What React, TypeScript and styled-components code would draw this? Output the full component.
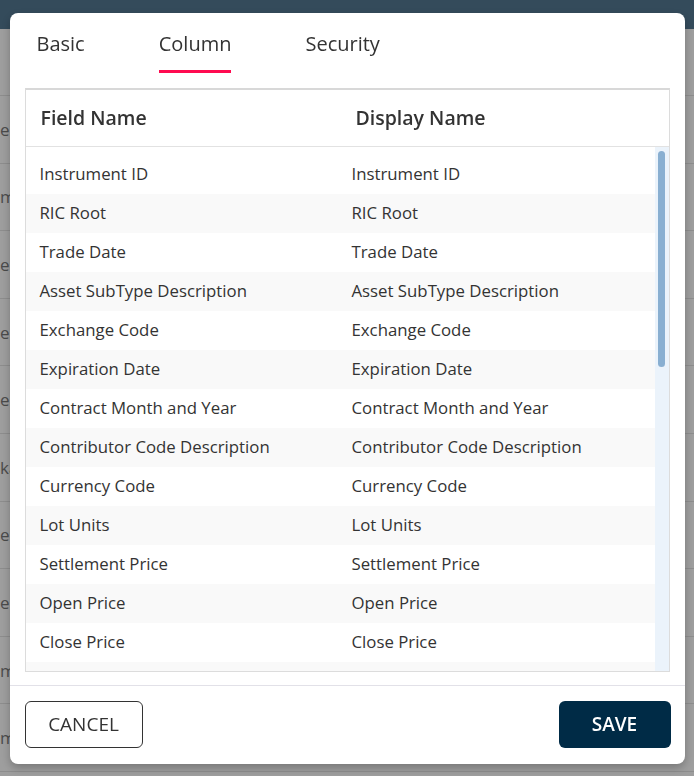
import React from "react";
import styled, { createGlobalStyle } from "styled-components";

const GlobalStyle = createGlobalStyle`
  html, body {
    margin: 0;
    padding: 0;
    background: #ffffff;
    font-family: "Open Sans", "Liberation Sans", sans-serif;
  }
  * { box-sizing: border-box; }
`;

/* ---------- background page ---------- */
const Page = styled.div`
  width: 694px;
  height: 776px;
  overflow: hidden;
  background: #ffffff;
`;

const PageHeader = styled.div`
  height: 29px;
  background: #547993;
`;

const PageRow = styled.div<{ $first?: boolean }>`
  height: ${(p) => (p.$first ? "67px" : "67.6px")};
  border-bottom: 1px solid #e4e4e4;
  display: flex;
  align-items: center;
  font-size: 17px;
  color: #7a7a7a;
  white-space: nowrap;
`;

/* ---------- modal ---------- */
const Overlay = styled.div`
  position: fixed;
  inset: 0;
  background: rgba(0, 0, 0, 0.38);
  display: flex;
  align-items: center;
  justify-content: center;
`;

const Modal = styled.div`
  width: 675px;
  height: 751px;
  background: #ffffff;
  border-radius: 8px;
  box-shadow: 0 4px 10px rgba(0, 0, 0, 0.25);
  display: flex;
  flex-direction: column;
  color: #333333;
`;

const TabBar = styled.div`
  display: flex;
  gap: 74px;
  padding-left: 27px;
  margin-bottom: 15px;
`;

const Tab = styled.div<{ $active?: boolean }>`
  padding-top: 17px;
  padding-bottom: 13px;
  font-size: 20px;
  line-height: 27px;
  color: #333333;
  border-bottom: 3px solid ${(p) => (p.$active ? "#ff0a50" : "transparent")};
  cursor: pointer;
`;

const TableBox = styled.div`
  margin: 0 15px;
  height: 584px;
  border: 1px solid #dcdcdc;
  border-top: 2px solid #d8d8d8;
  display: flex;
  flex-direction: column;
`;

const HeaderRow = styled.div`
  height: 57px;
  flex: none;
  border-bottom: 1px solid #e2e2e2;
  display: grid;
  grid-template-columns: 315px 1fr;
  align-items: center;
  padding-left: 15px;
  font-size: 19.5px;
  font-weight: 600;
  color: #333333;
`;

const BodyWrap = styled.div`
  flex: 1;
  min-height: 0;
  display: flex;
`;

const Body = styled.div`
  flex: 1;
  overflow: hidden;
  padding-top: 8px;
`;

const ScrollTrack = styled.div`
  width: 14px;
  flex: none;
  background: #ebf3fb;
  padding: 4px 4px 0 3px;
`;

const ScrollThumb = styled.div`
  height: 216px;
  border-radius: 4px;
  background: #89afd1;
`;

const Row = styled.div<{ $striped?: boolean }>`
  height: 39px;
  display: grid;
  grid-template-columns: 312px 1fr;
  align-items: center;
  padding-left: 14px;
  padding-bottom: 1px;
  font-size: 16.8px;
  color: #333333;
  background: ${(p) => (p.$striped ? "#f9f9f9" : "#ffffff")};
`;

const Divider = styled.div`
  margin-top: 13px;
  height: 1px;
  background: #e2e1e8;
`;

const Footer = styled.div`
  display: flex;
  justify-content: space-between;
  padding: 15px 14px 16px 15px;
`;

const Button = styled.button<{ $primary?: boolean }>`
  height: 47px;
  width: ${(p) => (p.$primary ? "112px" : "118px")};
  border-radius: 6px;
  font-family: "Open Sans", "Liberation Sans", sans-serif;
  font-size: 19px;
  font-weight: ${(p) => (p.$primary ? 600 : 400)};
  color: ${(p) => (p.$primary ? "#ffffff" : "#333333")};
  background: ${(p) => (p.$primary ? "#002b46" : "#ffffff")};
  border: ${(p) => (p.$primary ? "none" : "1px solid #333333")};
  cursor: pointer;
`;

const fields = [
  "Instrument ID",
  "RIC Root",
  "Trade Date",
  "Asset SubType Description",
  "Exchange Code",
  "Expiration Date",
  "Contract Month and Year",
  "Contributor Code Description",
  "Currency Code",
  "Lot Units",
  "Settlement Price",
  "Open Price",
  "Close Price",
  "",
];

const pageRows = ["", "e", "m", "e", "e", "e", "ka", "e", "e", "m", "m"];

export default function App() {
  return (
    <>
      <GlobalStyle />
      <Page>
        <PageHeader />
        {pageRows.map((t, i) => (
          <PageRow key={i} $first={i === 0}>
            {t}
          </PageRow>
        ))}
      </Page>
      <Overlay>
        <Modal>
          <TabBar>
            <Tab>Basic</Tab>
            <Tab $active>Column</Tab>
            <Tab>Security</Tab>
          </TabBar>
          <TableBox>
            <HeaderRow>
              <span>Field Name</span>
              <span>Display Name</span>
            </HeaderRow>
            <BodyWrap>
              <Body>
                {fields.map((f, i) => (
                  <Row key={i} $striped={i % 2 === 1}>
                    <span>{f}</span>
                    <span>{f}</span>
                  </Row>
                ))}
              </Body>
              <ScrollTrack>
                <ScrollThumb />
              </ScrollTrack>
            </BodyWrap>
          </TableBox>
          <Divider />
          <Footer>
            <Button>CANCEL</Button>
            <Button $primary>SAVE</Button>
          </Footer>
        </Modal>
      </Overlay>
    </>
  );
}
